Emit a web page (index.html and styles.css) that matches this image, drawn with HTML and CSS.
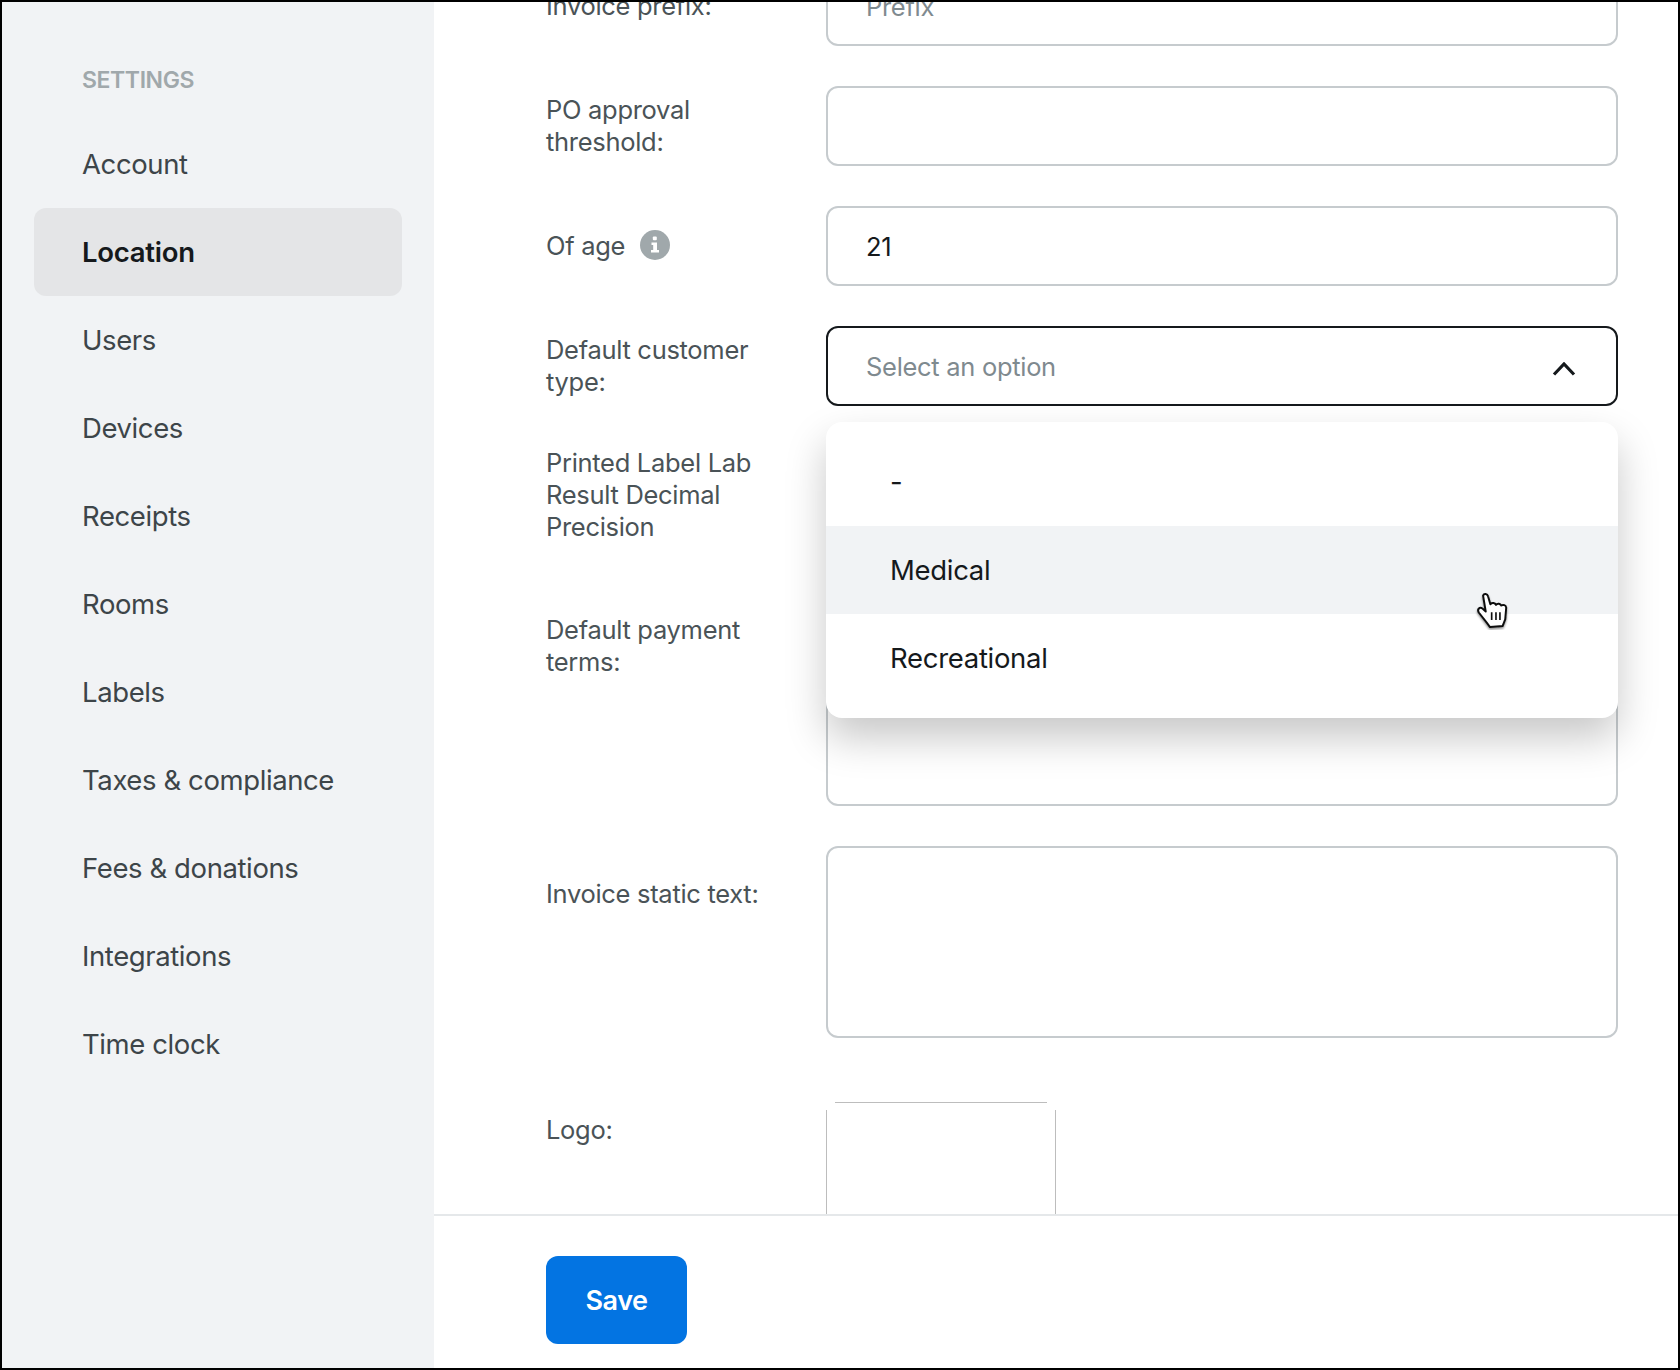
FILE: index.html
```html
<!DOCTYPE html>
<html lang="en">
<head>
<meta charset="UTF-8" />
<title>Location settings</title>
<link rel="stylesheet" href="styles.css">
</head>
<body>

<div class="window">
  <nav class="sidebar">
    <div class="sidebar-title">SETTINGS</div>
    <a class="nav-item">Account</a>
    <a class="nav-item active">Location</a>
    <a class="nav-item">Users</a>
    <a class="nav-item">Devices</a>
    <a class="nav-item">Receipts</a>
    <a class="nav-item">Rooms</a>
    <a class="nav-item">Labels</a>
    <a class="nav-item">Taxes &amp; compliance</a>
    <a class="nav-item">Fees &amp; donations</a>
    <a class="nav-item">Integrations</a>
    <a class="nav-item">Time clock</a>
  </nav>

  <main class="main">
    <div class="scroll-area">
      <form class="form">
        <div class="row">
          <label class="label">Invoice prefix:</label>
          <div class="input placeholder">Prefix</div>
        </div>
        <div class="row">
          <label class="label">PO approval threshold:</label>
          <div class="input"></div>
        </div>
        <div class="row">
          <label class="label">Of age
            <svg class="info-icon" viewBox="0 0 30 30" width="30" height="30">
              <circle cx="15" cy="15" r="15" fill="#a0a8ab"/>
              <rect x="12.8" y="6.5" width="4" height="3.8" rx="1" fill="#fff"/>
              <path d="M11.5 12.5h5.5v7.5h2v2.6h-8v-2.6h2.2v-4.9h-1.7z" fill="#fff"/>
            </svg>
          </label>
          <div class="input value">21</div>
        </div>
        <div class="row">
          <label class="label">Default customer type:</label>
          <div class="select-wrap">
            <div class="input select placeholder">
              Select an option
              <svg class="chevron" viewBox="0 0 24 14" width="24" height="14">
                <polyline points="2,12.5 12,2 22,12.5" fill="none" stroke="#15191c" stroke-width="3.2"/>
              </svg>
            </div>
            <div class="menu">
              <div class="option">-</div>
              <div class="option hover">Medical</div>
              <div class="option">Recreational</div>
            </div>
          </div>
        </div>
        <div class="row row-tall">
          <label class="label">Printed Label Lab Result Decimal Precision</label>
          <div class="input"></div>
        </div>
        <div class="row row-terms">
          <label class="label">Default payment terms:</label>
          <div class="input terms"></div>
        </div>
        <div class="row row-text">
          <label class="label">Invoice static text:</label>
          <div class="input textarea"></div>
        </div>
        <div class="row row-logo">
          <label class="label">Logo:</label>
          <div class="logo-box"></div>
        </div>
      </form>
    </div>
    <footer class="footer">
      <button class="save-button" type="button">Save</button>
    </footer>
  </main>

  <!-- mouse pointer from the capture -->
  <svg class="hand-cursor" viewBox="105 62 105 118" width="35" height="39">
    <defs>
      <filter id="handShadow" x="-30%" y="-30%" width="160%" height="160%">
        <feDropShadow dx="0" dy="5" stdDeviation="3" flood-color="#000" flood-opacity="0.45"/>
      </filter>
    </defs>
    <path filter="url(#handShadow)" d="M129 76C132 68 142 70 144 78L151 102C157 96 165 98 168 104C173 98 181 100 184 106C190 102 198 105 199 112L196 148L188 168L150 171L140 158L116 127C110 117 119 109 127 115L137 124Z" fill="#fff" stroke="#111" stroke-width="6" stroke-linejoin="round"/>
    <path d="M155 126V150M168 126V150M180 126V150" stroke="#111" stroke-width="5" fill="none"/>
  </svg>
</div>

</body>
</html>
```

FILE: styles.css
```css
* { box-sizing: border-box; }

html, body {
  margin: 0;
  padding: 0;
  background: #fff;
  font-family: Inter, "Noto Sans", sans-serif;
}

.window {
  position: relative;
  display: flex;
  width: 1680px;
  height: 1370px;
  border: 2px solid #000;
  overflow: hidden;
}

/* sidebar */
.sidebar {
  width: 432px;
  flex-shrink: 0;
  padding: 62px 32px 0;
  background-color: #f1f3f5;
}

.sidebar-title {
  height: 32px;
  margin: 0 0 24px 48px;
  font-size: 23px;
  font-weight: 600;
  letter-spacing: -0.4px;
  line-height: 32px;
  color: #a0a8ab;
}

.nav-item {
  display: flex;
  align-items: center;
  height: 88px;
  padding-left: 48px;
  border-radius: 12px;
  font-size: 27.5px;
  letter-spacing: -0.4px;
  color: #3d4549;
}

.nav-item.active {
  background-color: #e4e5e7;
  font-weight: 600;
  letter-spacing: -0.25px;
  color: #15191c;
}

/* form */
.main {
  flex: 1;
  display: flex;
  flex-direction: column;
  min-width: 0;
}

.scroll-area {
  flex: 1;
  min-height: 0;
  overflow: hidden;
}

.form {
  margin-top: -36px;
  padding: 0 60px 0 112px;
}

.row {
  display: grid;
  grid-template-columns: 280px 1fr;
  align-items: center;
  margin-bottom: 40px;
}

.label {
  display: block;
  padding-right: 30px;
  font-size: 25.5px;
  letter-spacing: -0.3px;
  line-height: 32px;
  color: #4a5357;
}

.info-icon {
  margin-left: 8px;
  vertical-align: -5px;
}

.input {
  display: flex;
  align-items: center;
  height: 80px;
  padding: 0 38px;
  border: 2px solid #c6cbce;
  border-radius: 12px;
  background-color: #fff;
  font-size: 25.5px;
  letter-spacing: -0.3px;
}

.input.value { color: #15191c; }
.input.placeholder { color: #7f8a8f; }

.select-wrap { position: relative; }

.select {
  justify-content: space-between;
  padding-right: 40px;
  border-color: #15191c;
}

.chevron { margin-top: 6px; }

.menu {
  position: absolute;
  top: 96px;
  left: 0;
  right: 0;
  z-index: 10;
  padding: 16px 0;
  border-radius: 16px;
  background-color: #fff;
  box-shadow: 0 20px 40px rgba(0, 0, 0, 0.22);
}

.option {
  display: flex;
  align-items: center;
  height: 88px;
  padding-left: 64px;
  font-size: 27.5px;
  letter-spacing: -0.3px;
  color: #15191c;
}

.option.hover { background-color: #f1f3f5; }

.row-tall {
  height: 120px;
  align-items: start;
}
.row-tall .label { padding-top: 1px; }

.row-terms { align-items: start; }
.row-terms .label { padding-top: 8px; }

.terms { height: 200px; }

.row-text { align-items: start; }
.row-text .label { padding-top: 32px; }

.textarea { height: 192px; }

.row-logo {
  margin-top: 64px;
  align-items: start;
}
.row-logo .label { padding-top: 12px; }

.logo-box {
  position: relative;
  width: 230px;
  height: 200px;
  margin-top: 8px;
  border-left: 1px solid #bdbdbd;
  border-right: 1px solid #bdbdbd;
}

.logo-box::before {
  content: "";
  position: absolute;
  top: -8px;
  left: 8px;
  right: 8px;
  border-top: 1px solid #bdbdbd;
}

/* save bar */
.footer {
  flex-shrink: 0;
  height: 154px;
  padding: 40px 0 24px 112px;
  border-top: 2px solid #e5e8ea;
  background-color: #fff;
}

.save-button {
  width: 141px;
  height: 88px;
  border: none;
  border-radius: 12px;
  background-color: #0374e2;
  font-family: inherit;
  font-size: 27px;
  font-weight: 600;
  letter-spacing: -0.5px;
  color: #fff;
}

.hand-cursor {
  position: absolute;
  top: 589px;
  left: 1473px;
  z-index: 20;
}
```
